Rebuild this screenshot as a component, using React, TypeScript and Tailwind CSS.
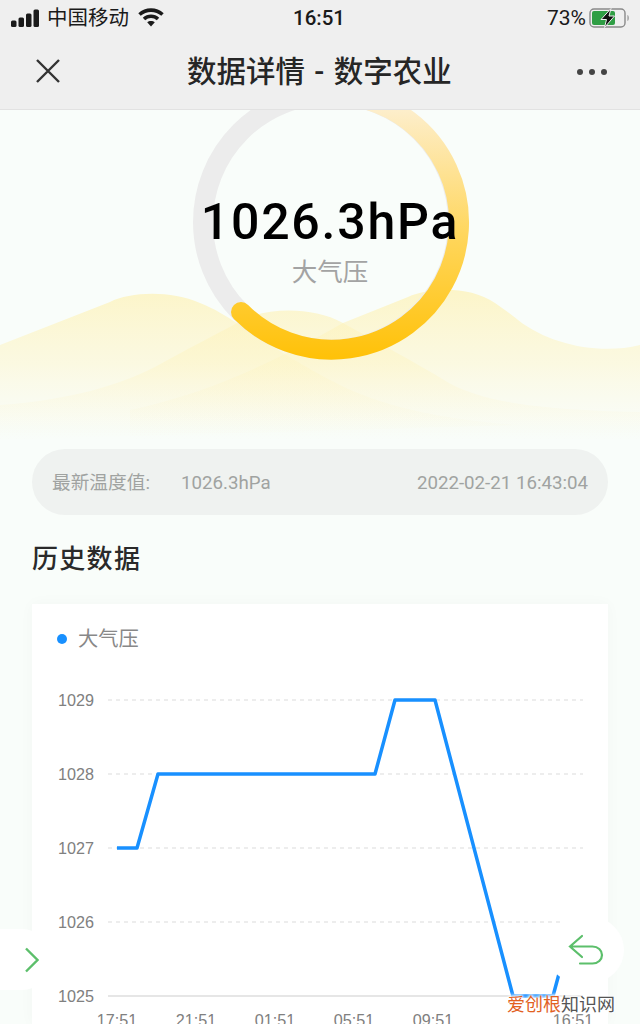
const cjk = "font-['Roboto','Noto_Sans_CJK_SC',sans-serif]";

function Signal() {
  return (
    <svg width="30" height="18" viewBox="0 0 30 18" className="fill-[#1a1a1a]">
      <rect x="0" y="11.500" width="5.500" height="6.500" rx="1.500" />
      <rect x="7.500" y="8.500" width="5.500" height="9.500" rx="1.500" />
      <rect x="15" y="4.500" width="5.500" height="13.500" rx="1.500" />
      <rect x="22.500" y="0.500" width="5.500" height="17.500" rx="1.500" />
    </svg>
  );
}

function Wifi() {
  return (
    <svg width="26" height="19" viewBox="0 0 26 19" fill="none" stroke="#1a1a1a" strokeWidth="3.600">
      <path d="M1.500 6.500C8 .6 18 .6 24.500 6.500" />
      <path d="M6 11c4-3.600 10-3.600 14 0" />
      <path d="M13 18.500l-3.800-4.200c2-1.600 5.600-1.600 7.600 0z" fill="#1a1a1a" stroke="none" />
    </svg>
  );
}

function Battery() {
  return (
    <svg width="41" height="20" viewBox="0 0 41 20">
      <rect x="1" y="1" width="35" height="18" rx="4" fill="none" stroke="#8a8a8a" strokeWidth="1.400" />
      <rect x="3" y="3" width="23" height="14" rx="2" fill="#2f9e44" />
      <path d="M38.500 7c1.600.4 1.600 5.600 0 6z" fill="#8a8a8a" />
      <path d="M22 0.500l-10 11h5.500l-2 8 10-11.500h-5.500z" fill="#111" stroke="#efefef" strokeWidth="1" />
    </svg>
  );
}

function Hero() {
  return (
    <svg className="absolute left-0 top-0" width="640" height="340" viewBox="0 110 640 340">
      <defs>
        <linearGradient id="hill" x1="0" y1="290" x2="0" y2="440" gradientUnits="userSpaceOnUse">
          <stop offset="0" stopColor="#fdf2b8" stopOpacity="0.75" />
          <stop offset="0.5" stopColor="#fdf4c4" stopOpacity="0.45" />
          <stop offset="1" stopColor="#fdf7dc" stopOpacity="0" />
        </linearGradient>
        <linearGradient id="ring" x1="0" y1="360" x2="0" y2="110" gradientUnits="userSpaceOnUse">
          <stop offset="0" stopColor="#ffc107" />
          <stop offset="0.5" stopColor="#ffd65c" />
          <stop offset="1" stopColor="#fdeecb" />
        </linearGradient>
      </defs>
      <path d="M0 345L110 302C130 292 170 290 200 303C215 309 226 316 237 323C262 340 300 365 340 385C380 405 440 420 520 425L0 440z" fill="url(#hill)" />
      <path d="M0 405C70 400 120 385 155 367C185 350 215 335 237 323C260 308 310 305 343 323C370 338 420 365 449 383C480 400 530 410 640 412V440H0z" fill="url(#hill)" />
      <path d="M130 410C200 395 260 370 343 323L408 297C430 287 470 286 495 303C505 310 512 315 518 320C550 345 600 355 640 345V440H130z" fill="url(#hill)" />
      <circle cx="330.500" cy="222" r="127.500" fill="none" stroke="#ececec" strokeWidth="20" />
      <path d="M241 312A127.500 127.500 0 1 0 358 97.500" fill="none" stroke="url(#ring)" strokeWidth="20" strokeLinecap="round" />
    </svg>
  );
}

function Chart() {
  const rows = [
    { y: 700, label: "1029" },
    { y: 774, label: "1028" },
    { y: 848, label: "1027" },
    { y: 922, label: "1026" },
  ];
  const xs = [
    { x: 117, label: "17:51" },
    { x: 196, label: "21:51" },
    { x: 275, label: "01:51" },
    { x: 354, label: "05:51" },
    { x: 433, label: "09:51" },
    { x: 573, label: "16:51" },
  ];
  return (
    <svg width="576" height="350" viewBox="32 674 576 350" className="font-['Liberation_Sans',sans-serif]">
      {rows.map((r) => (
        <g key={r.y}>
          <line x1="108" x2="583" y1={r.y} y2={r.y} stroke="#e8e8e8" strokeWidth="1.500" strokeDasharray="4 4" />
          <text x="94" y={r.y + 6} textAnchor="end" fontSize="16.200" fill="#808080">{r.label}</text>
        </g>
      ))}
      <line x1="108" x2="583" y1="996" y2="996" stroke="#dedede" strokeWidth="1.500" />
      <text x="94" y="1002" textAnchor="end" fontSize="16.200" fill="#808080">1025</text>
      {xs.map((t) => (
        <text key={t.x} x={t.x} y="1026" textAnchor="middle" fontSize="16.200" fill="#808080">{t.label}</text>
      ))}
      <polyline
        points="117,848 137,848 158,774 375,774 395,700 435,700 513,996 553,996 573,922"
        fill="none"
        stroke="#1890ff"
        strokeWidth="3.500"
        strokeLinejoin="round"
      />
    </svg>
  );
}

export default function App() {
  return (
    <div className={`relative h-[1024px] w-[640px] overflow-hidden bg-[#f9fdfa] ${cjk}`}>
      <header className="h-[110px] border-b border-[#e2e2e2] bg-[#efefef]">
        {/* Status bar */}
        <div className="relative flex h-[35px] items-center pl-[11px] pr-[10px] text-[20.500px] text-[#1a1a1a]">
          <Signal />
          <span className="ml-[6px] pt-[2px] leading-none">中国移动</span>
          <span className="ml-[9px]"><Wifi /></span>
          <span className="absolute left-[293px] pt-[1px] font-medium leading-none">16:51</span>
          <span className="ml-auto pt-[1px] text-[21px] leading-none">73%</span>
          <span className="ml-[3px]"><Battery /></span>
        </div>
        {/* Nav */}
        <div className="flex h-[74px] items-center pl-[36px] pr-[33px]">
          <svg width="24" height="24" viewBox="0 0 24 24" stroke="#333" strokeWidth="2.400" className="mb-[2px]">
            <path d="M1 1l22 22M23 1L1 23" />
          </svg>
          <h1 className="ml-[127px] pt-[2px] text-[29.500px] font-medium leading-none text-[#262626] [word-spacing:2px]">数据详情 - 数字农业</h1>
          <div className="ml-auto flex gap-[6px]">
            <span className="size-[6px] rounded-full bg-[#444]" />
            <span className="size-[6px] rounded-full bg-[#444]" />
            <span className="size-[6px] rounded-full bg-[#444]" />
          </div>
        </div>
      </header>

      <section className="relative h-[339px] overflow-hidden">
        <Hero />
        <div className="relative flex flex-col items-center pl-[20px] pt-[83px]">
          <p className="font-['Roboto',sans-serif] text-[50px] font-medium leading-[58px] tracking-[1.800px] text-black">1026.3hPa</p>
          <p className="mt-[5px] text-[25.500px] leading-[32px] text-[#a3a3a3]">大气压</p>
        </div>
      </section>

      <div className="px-[32px]">
        <div className="flex h-[66px] items-center rounded-full bg-[#eff2f0] px-[20px] pt-[2px] text-[18.700px] text-[#a0a3a1]">
          <span>最新温度值:</span>
          <span className="ml-[31px]">1026.3hPa</span>
          <span className="ml-auto">2022-02-21 16:43:04</span>
        </div>

        <h2 className="mt-[27px] text-[26px] font-medium leading-[34px] tracking-[1.300px] text-[#2a2a2a]">历史数据</h2>

        <div className="mt-[28px] bg-white shadow-[0_0_14px_rgba(0,0,0,0.03)]">
          <div className="flex h-[70px] items-start pl-[25px] pt-[20px]">
            <span className="mt-[10px] size-[10px] rounded-full bg-[#1890ff]" />
            <span className="ml-[11px] text-[20.300px] leading-[30px] text-[#888]">大气压</span>
          </div>
          <Chart />
        </div>
      </div>

      {/* Floating buttons */}
      <div className="absolute left-0 top-[929px] flex h-[61px] w-[52px] items-center rounded-r-full bg-white pl-[25px]">
        <svg width="14" height="26" viewBox="0 0 14 26" fill="none" stroke="#5cbf6b" strokeWidth="2.400">
          <path d="M1 1.500L12.500 13 1 24.500" />
        </svg>
      </div>
      <div className="absolute left-[546px] top-[917px] flex h-[66px] w-[78px] items-center rounded-full bg-white pl-[22px]">
        <svg width="36" height="32" viewBox="0 0 36 32" fill="none" stroke="#5cbf6b" strokeWidth="2.200" strokeLinecap="round">
          <path d="M14 2L2 12.500l12 10.500M2 12.500h22.500c5.500 0 9.500 4 9.500 8.500s-4 8.500-9.500 8.500H12" />
        </svg>
      </div>

      {/* Watermark */}
      <div className="absolute left-[507px] top-[992px] text-[18px] leading-[26px] [text-shadow:0_0_2px_#fff,0_0_3px_#fff,0_0_4px_#fff,0_0_4px_#fff,0_0_5px_#fff]">
        <span className="text-[#e2611f]">爱创根</span>
        <span className="text-[#555]">知识网</span>
      </div>
    </div>
  );
}
